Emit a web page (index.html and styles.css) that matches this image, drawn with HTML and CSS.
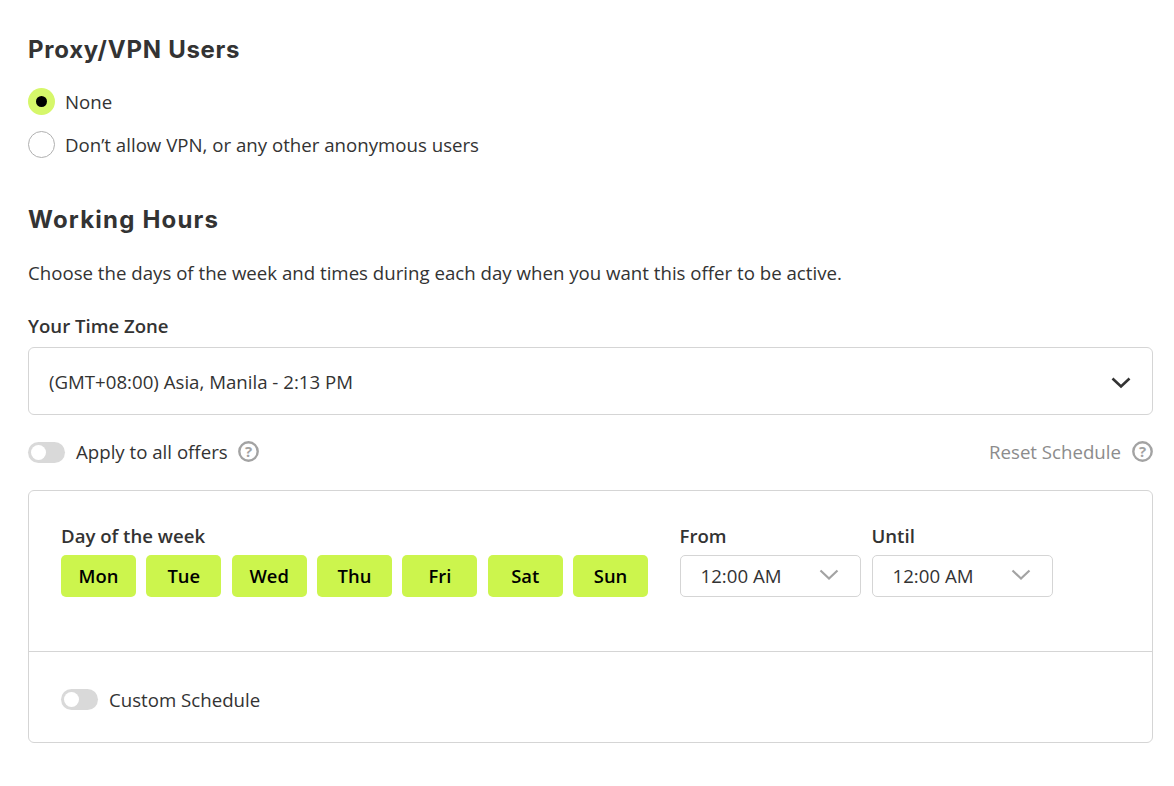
FILE: index.html
```html
<!DOCTYPE html>
<html lang="en">
<head>
<meta charset="utf-8">
<title>Offer settings</title>
<link rel="stylesheet" href="styles.css">
</head>
<body>
<main class="page">
  <h2 class="heading">Proxy/VPN Users</h2>
  <div class="radios">
    <label class="radio-row"><span class="radio radio-on"><span class="radio-dot"></span></span>None</label>
    <label class="radio-row"><span class="radio"></span>Don’t allow VPN, or any other anonymous users</label>
  </div>
  <h2 class="heading heading-hours">Working Hours</h2>
  <p class="intro">Choose the days of the week and times during each day when you want this offer to be active.</p>
  <div class="label zone-label">Your Time Zone</div>
  <div class="zone-select">
    <span class="zone-value">(GMT+08:00) Asia, Manila - 2:13 PM</span>
    <svg class="zone-chevron" width="20" height="12" viewBox="0 0 20 12"><path d="M1.5 1.5 10 9.5l8.5-8" fill="none" stroke="#333" stroke-width="2.6"/></svg>
  </div>
  <div class="options">
    <div class="option">
      <span class="toggle toggle-apply"><span class="knob"></span></span>
      <span>Apply to all offers</span>
      <svg class="help" width="21" height="21" viewBox="0 0 21 21"><circle cx="10.5" cy="10.5" r="9.2" fill="none" stroke="#a3a3a3" stroke-width="2.4"/><text x="10.5" y="15.5" text-anchor="middle" class="help-mark">?</text></svg>
    </div>
    <div class="option option-reset">
      <span>Reset Schedule</span>
      <svg class="help" width="21" height="21" viewBox="0 0 21 21"><circle cx="10.5" cy="10.5" r="9.2" fill="none" stroke="#a3a3a3" stroke-width="2.4"/><text x="10.5" y="15.5" text-anchor="middle" class="help-mark">?</text></svg>
    </div>
  </div>
  <section class="card">
    <div class="card-top">
      <div class="days-col">
        <div class="label">Day of the week</div>
        <div class="days">
          <button class="day">Mon</button><button class="day">Tue</button><button class="day">Wed</button><button class="day">Thu</button><button class="day">Fri</button><button class="day">Sat</button><button class="day">Sun</button>
        </div>
      </div>
      <div class="time-col">
        <div class="label">From</div>
        <div class="time-select"><span>12:00 AM</span><svg width="20" height="12" viewBox="0 0 20 12"><path d="M1.5 1.5 10 9.5l8.5-8" fill="none" stroke="#a3a3a3" stroke-width="2.2"/></svg></div>
      </div>
      <div class="time-col">
        <div class="label">Until</div>
        <div class="time-select"><span>12:00 AM</span><svg width="20" height="12" viewBox="0 0 20 12"><path d="M1.5 1.5 10 9.5l8.5-8" fill="none" stroke="#a3a3a3" stroke-width="2.2"/></svg></div>
      </div>
    </div>
    <div class="card-bottom">
      <span class="toggle toggle-custom"><span class="knob"></span></span>
      <span>Custom Schedule</span>
    </div>
  </section>
</main>
</body>
</html>
```

FILE: styles.css
```css
* { box-sizing: border-box; }
html, body { margin: 0; padding: 0; background: #fff; }
body {
  font-family: "Open Sans", "Liberation Sans", sans-serif;
  font-size: 18.67px;
  line-height: 24px;
  color: #333;
  overflow: hidden;
}
.page { width: 1125px; margin-left: 28px; height: 786px; padding-top: 36px; }
.heading {
  margin: 0;
  font-family: Inter, "Liberation Sans", sans-serif;
  font-size: 24px;
  line-height: 28px;
  font-weight: 700;
  letter-spacing: 0.72px;
  color: #333;
}
.radios { margin-top: 24px; display: flex; flex-direction: column; gap: 16px; }
.radio-row { display: flex; align-items: center; gap: 10px; height: 27px; }
.radio {
  width: 27px; height: 27px; border-radius: 50%;
  border: 1px solid #b0b0b0; background: #fff;
  display: flex; align-items: center; justify-content: center;
}
.radio-on { border: 0; background: #d6f76a; }
.radio-dot { width: 11px; height: 11px; border-radius: 50%; background: #000; }
.heading-hours { margin-top: 48px; letter-spacing: 1.2px; }
.intro { margin: 27px 0 0; }
.label { font-weight: 600; font-size: 18.6px; }
.zone-label { margin-top: 29px; }
.zone-select {
  margin-top: 9px; height: 68px;
  border: 1px solid #d5d5d5; border-radius: 6px;
  padding: 0 21px 0 20px;
  display: flex; align-items: center; justify-content: space-between;
}
.zone-value { margin-top: 2px; }
.zone-chevron { margin-top: 4px; }
.options { margin-top: 23px; height: 27px; display: flex; align-items: center; justify-content: space-between; }
.option { display: flex; align-items: center; }
.option-reset { color: #8c8c8c; }
.option-reset .help { margin-left: 11px; }
.help { margin-left: 10px; }
.help-mark { font-family: "Open Sans", sans-serif; font-size: 15px; font-weight: 700; fill: #a3a3a3; }
.toggle {
  width: 37px; height: 21px; border-radius: 11px; background: #d9d9d9;
  display: flex; align-items: center; padding-left: 3px; margin-right: 11px;
}
.toggle-apply { margin-top: 2px; }
.toggle-custom { margin-top: -2px; }
.knob { width: 15px; height: 15px; border-radius: 50%; background: #fff; }
.card { margin-top: 25px; height: 253px; border: 1px solid #d5d5d5; border-radius: 6px; }
.card-top { height: 161px; padding: 33px 32px 0; display: flex; border-bottom: 1px solid #d5d5d5; }
.days-col { width: 587px; margin-right: 31.5px; }
.days { margin-top: 7px; display: grid; grid-template-columns: repeat(7, 1fr); column-gap: 10.5px; }
.day {
  height: 42px; border: 0; border-radius: 5px; background: #ccf54d; padding: 0;
  font: 600 18.4px/24px "Open Sans", sans-serif; color: #000;
}
.time-col { width: 181px; margin-right: 11px; }
.time-select {
  margin-top: 7px; height: 42px;
  border: 1px solid #d5d5d5; border-radius: 5px;
  padding: 0 21px 0 20px;
  display: flex; align-items: center; justify-content: space-between;
}
.time-select svg { margin-bottom: 2px; }
.card-bottom { height: 90px; padding: 6px 32px 0; display: flex; align-items: center; }
```
